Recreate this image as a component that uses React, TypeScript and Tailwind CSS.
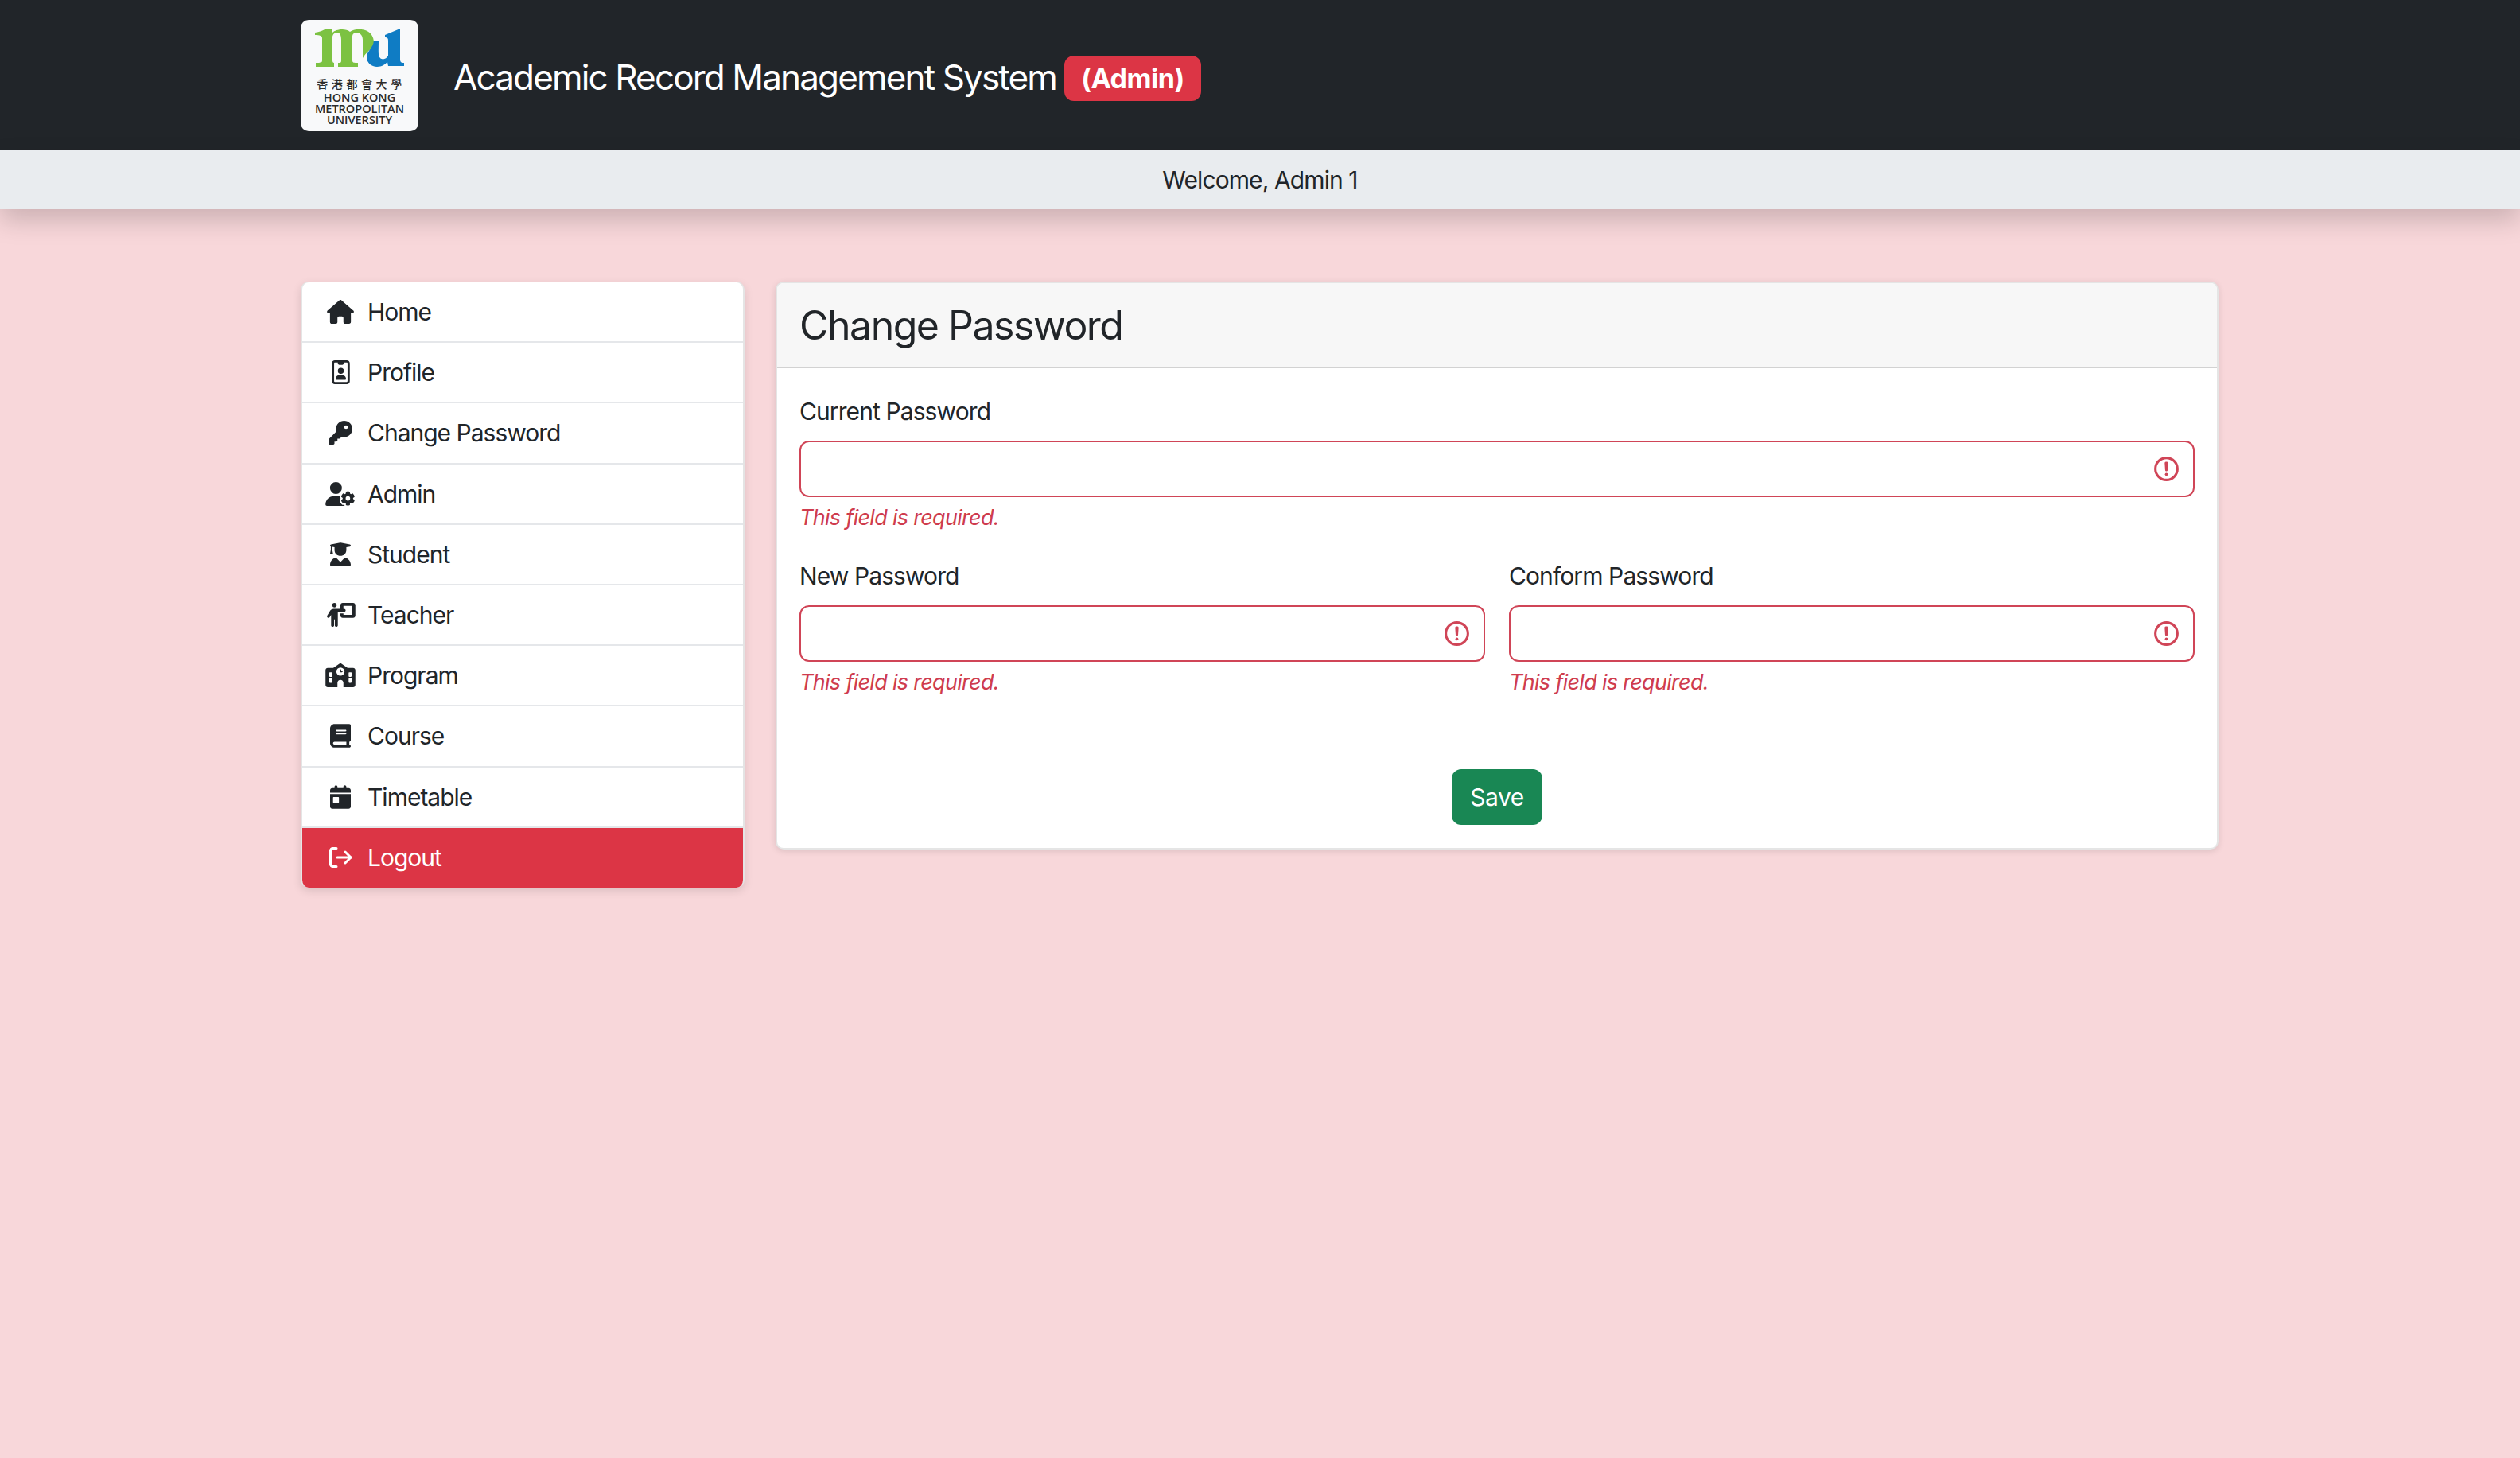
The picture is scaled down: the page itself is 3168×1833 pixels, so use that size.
import { FaHouse, FaRegIdBadge, FaKey, FaUserGear, FaUserGraduate, FaPersonChalkboard, FaSchool, FaBook, FaCalendarDay } from "react-icons/fa6";
import type { ComponentType } from "react";

const menu: { label: string; icon: ComponentType<{ className?: string }>; size: string }[] = [
    { label: "Home", icon: FaHouse, size: "h-[30px] w-[34px]" },
    { label: "Profile", icon: FaRegIdBadge, size: "h-[30px] w-[23px]" },
    { label: "Change Password", icon: FaKey, size: "h-[30px] w-[30px]" },
    { label: "Admin", icon: FaUserGear, size: "h-[30px] w-[38px]" },
    { label: "Student", icon: FaUserGraduate, size: "h-[30px] w-[26px]" },
    { label: "Teacher", icon: FaPersonChalkboard, size: "h-[30px] w-[38px]" },
    { label: "Program", icon: FaSchool, size: "h-[30px] w-[38px]" },
    { label: "Course", icon: FaBook, size: "h-[30px] w-[26px]" },
    { label: "Timetable", icon: FaCalendarDay, size: "h-[30px] w-[26px]" },
];

function Logo() {
    return (
        <div className="flex h-[140px] w-[148px] flex-col items-center rounded-[10px] bg-[#f8f9fa] pt-[11px]">
            <svg width="112" height="48" viewBox="0 0 112 48">
                <path fill="#7cc242" d="M0 5 Q8 4 14 0 L22 0 L22 5 C26 1 38 -1 44 4 C50 -1 72 -2 74 16 C75 24 66 28 62 34 L60 37 L60 14 C60 8 56 5 52 5 C49 5 47 7 47 10 L47 40 C47 43 49 43 54 43 L54 48 L29 48 L29 43 C32 43 33 43 33 40 L33 14 C33 8 31 5 28 5 C25 5 22 7 22 11 L22 40 C22 43 24 43 24 43 L24 48 L1 48 L1 43 C7 43 9 43 9 40 L9 12 C9 9 6 8 0 8 Z" />
                <path fill="#0f7cc4" d="M74 15 C73 25 65 28 65 36 C65 43 71 48 78 48 C84 48 88 45 91 42 L92 47 L112 47 L112 43 C108 43 107 42 107 38 L107 0 L88 8 L88 11 C91 11 92 12 92 15 L92 34 C90 38 85 40 82 37 C79 34 80 28 80 15 Z" />
            </svg>
            <div className="mt-[13px] h-[16px] pl-[4px] font-['Noto_Sans_CJK_TC',sans-serif] text-[14px] leading-[16px] font-medium tracking-[4.6px] text-[#2b2b2b]">香港都會大學</div>
            <div className="mt-[3px] text-center font-['Open_Sans',sans-serif] text-[14.5px] leading-[14px] font-semibold text-[#2b2b2b]">
                <div>HONG KONG</div>
                <div>METROPOLITAN</div>
                <div>UNIVERSITY</div>
            </div>
        </div>
    );
}

function Field({ label, className }: { label: string; className?: string }) {
    return (
        <div className={className}>
            <label className="mb-[18px] block h-[38px] text-[30px] leading-[38px] tracking-[-0.9px]">{label}</label>
            <div className="flex h-[71px] items-center justify-end rounded-[12px] border-2 border-[#d04557] bg-white pr-[15px]">
                <svg width="37" height="37" viewBox="0 0 12 12" fill="none" stroke="#d04557">
                    <circle cx="6" cy="6" r="4.5" />
                    <path strokeLinejoin="round" d="M5.8 3.6h.4L6 6.5z" />
                    <circle cx="6" cy="8.2" r=".6" fill="#d04557" stroke="none" />
                </svg>
            </div>
            <div className="mt-[10px] h-[32px] text-[27px] leading-[32px] tracking-[-0.7px] text-[#cf3c4e] italic">This field is required.</div>
        </div>
    );
}

export default function App() {
    return (
        <div className="min-h-[1833px] bg-[#f8d7da] font-['Inter',sans-serif] text-[#212529]">
            <header className="flex h-[189px] items-center bg-[#212529] pl-[378px]">
                <Logo />
                <h1 className="mt-[4px] ml-[44px] text-[44px] leading-[56px] tracking-[-1.85px] text-white">Academic Record Management System</h1>
                <span className="mt-[8px] ml-[10px] flex h-[57px] w-[172px] items-center justify-center rounded-[12px] bg-[#dc3545] text-[34px] font-bold tracking-[-0.5px] text-white">(Admin)</span>
            </header>

            <div className="flex h-[74px] items-center justify-center bg-[#e9ecef] text-[30px] tracking-[-0.9px] shadow-[0_14px_32px_rgba(0,0,0,0.18)]">Welcome, Admin 1</div>

            <main className="mt-[91px] flex items-start gap-[39px] pl-[378px]">
                <nav className="w-[558px] overflow-hidden rounded-[10px] border-x-2 border-t border-black/10 bg-white text-[30px] tracking-[-1px] shadow-[0_4px_12px_rgba(0,0,0,0.12)]">
                    {menu.map(({ label, icon: Icon, size }) => (
                        <a key={label} className="flex h-[76.2px] items-center border-b-2 border-[#e5e7ea]">
                            <span className="flex w-[82px] justify-center pl-[14px]">
                                <Icon className={size} />
                            </span>
                            <span className="pt-[1px]">{label}</span>
                        </a>
                    ))}
                    <a className="flex h-[75px] items-center bg-[#dc3545] text-white">
                        <span className="flex w-[82px] justify-center pl-[14px]">
                            <svg width="30" height="26" viewBox="0 0 30 26" fill="none" stroke="currentColor" strokeWidth="3" strokeLinecap="round" strokeLinejoin="round">
                                <path d="M10 1.5H5.5a3 3 0 0 0-3 3v17a3 3 0 0 0 3 3H10" />
                                <path d="M11 13H28" />
                                <path d="M21 6l7 7-7 7" />
                            </svg>
                        </span>
                        <span className="pt-[1px]">Logout</span>
                    </a>
                </nav>

                <section className="w-[1814px] overflow-hidden rounded-[10px] border-2 border-black/10 bg-white shadow-[0_2px_8px_rgba(0,0,0,0.12)]">
                    <div className="flex h-[107px] items-center border-b-2 border-[#d2d2d2] bg-[#f7f7f7] px-[28px]">
                        <h2 className="text-[50px] leading-[62px] tracking-[-1.5px]">Change Password</h2>
                    </div>
                    <div className="px-[28px] pt-[35px] pb-[29px]">
                        <Field label="Current Password" className="mb-[38px]" />
                        <div className="flex gap-[30px]">
                            <Field label="New Password" className="flex-1" />
                            <Field label="Conform Password" className="flex-1" />
                        </div>
                        <div className="mt-[93px] flex justify-center">
                            <button className="h-[70px] w-[114px] rounded-[12px] bg-[#198754] text-[30px] tracking-[-0.5px] text-white">Save</button>
                        </div>
                    </div>
                </section>
            </main>
        </div>
    );
}
